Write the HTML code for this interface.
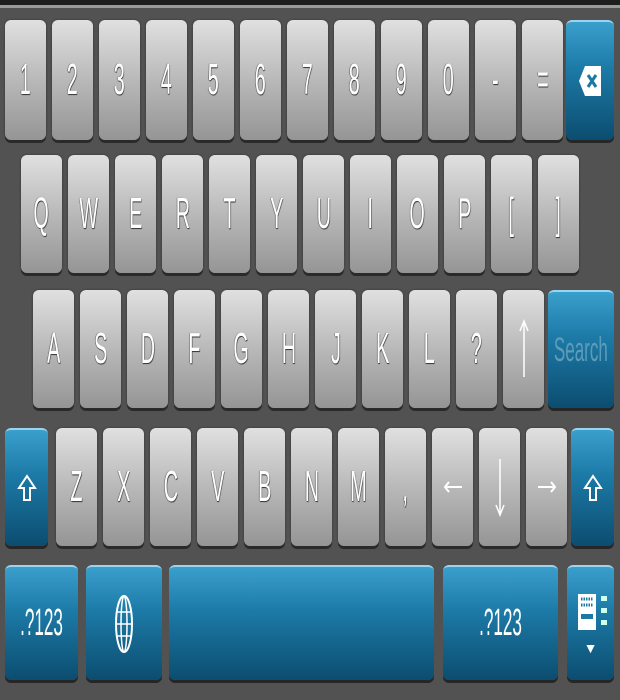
<!DOCTYPE html>
<html><head><meta charset="utf-8"><style>
body{margin:0;width:620px;height:700px;overflow:hidden;background:#525252;position:relative;font-family:"Liberation Sans",sans-serif}
.top{position:absolute;left:0;top:0;width:620px;height:5px;background:#1e1e1e}
.line{position:absolute;left:0;top:5px;width:620px;height:3px;background:#9a9a9a}
.k{position:absolute;width:41px;border-radius:6px;background:linear-gradient(#e0e0e0,#b5b5b5 55%,#959595);box-shadow:0 3px 0 #2a2a2a,0 0 2px #333;display:flex;align-items:center;justify-content:center;color:#fff}
.k span{display:inline-block;font-size:44px;transform:scaleX(.45);text-shadow:1px 1px 1px #333,-1px 0 1px #555;white-space:nowrap}
.b{position:absolute;border-radius:6px;background:linear-gradient(#3a9fcc,#1c79a6 40%,#0c4d70);border-top:2px solid #9ad4ef;box-shadow:0 3px 0 #262626;display:flex;align-items:center;justify-content:center;color:#fff}
.b span{display:inline-block;font-size:38px;transform:scaleX(.45);white-space:nowrap}
.r1{top:20px;height:120px}.r2{top:155px;height:118px}.r3{top:290px;height:118px}.r4{top:428px;height:118px}
</style></head><body>
<div class="top"></div><div class="line"></div>
<div class="k r1" style="left:5px"><span>1</span></div>
<div class="k r1" style="left:52px"><span>2</span></div>
<div class="k r1" style="left:99px"><span>3</span></div>
<div class="k r1" style="left:146px"><span>4</span></div>
<div class="k r1" style="left:193px"><span>5</span></div>
<div class="k r1" style="left:240px"><span>6</span></div>
<div class="k r1" style="left:287px"><span>7</span></div>
<div class="k r1" style="left:334px"><span>8</span></div>
<div class="k r1" style="left:381px"><span>9</span></div>
<div class="k r1" style="left:428px"><span>0</span></div>
<div class="k r1" style="left:475px"><span>-</span></div>
<div class="k r1" style="left:522px"><span>=</span></div>
<div class="b" style="left:566px;top:20px;width:48px;height:118px"><svg width="26" height="34" viewBox="0 0 26 34"><path d="M8 2h16v30H8L2 17z" fill="#fff"/><path d="M11 11l8 12M19 11l-8 12" stroke="#1c79a6" stroke-width="3"/></svg></div>

<div class="k r2" style="left:21px"><span>Q</span></div>
<div class="k r2" style="left:68px"><span>W</span></div>
<div class="k r2" style="left:115px"><span>E</span></div>
<div class="k r2" style="left:162px"><span>R</span></div>
<div class="k r2" style="left:209px"><span>T</span></div>
<div class="k r2" style="left:256px"><span>Y</span></div>
<div class="k r2" style="left:303px"><span>U</span></div>
<div class="k r2" style="left:350px"><span>I</span></div>
<div class="k r2" style="left:397px"><span>O</span></div>
<div class="k r2" style="left:444px"><span>P</span></div>
<div class="k r2" style="left:491px"><span>[</span></div>
<div class="k r2" style="left:538px"><span>]</span></div>

<div class="k r3" style="left:33px"><span>A</span></div>
<div class="k r3" style="left:80px"><span>S</span></div>
<div class="k r3" style="left:127px"><span>D</span></div>
<div class="k r3" style="left:174px"><span>F</span></div>
<div class="k r3" style="left:221px"><span>G</span></div>
<div class="k r3" style="left:268px"><span>H</span></div>
<div class="k r3" style="left:315px"><span>J</span></div>
<div class="k r3" style="left:362px"><span>K</span></div>
<div class="k r3" style="left:409px"><span>L</span></div>
<div class="k r3" style="left:456px"><span>?</span></div>
<div class="k r3" style="left:503px"><svg width="10" height="60" viewBox="0 0 10 60"><path d="M5 2v56M1 12L5 2l4 10" stroke="#fff" stroke-width="1.5" fill="none"/></svg></div>
<div class="b" style="left:548px;top:290px;width:66px;height:116px"><span style="color:#5d9bbb;font-size:34px;transform:scaleX(.5)">Search</span></div>

<div class="b" style="left:5px;top:428px;width:43px;height:116px"><svg width="20" height="28" viewBox="0 0 20 28"><path d="M10 2L2 14h5v12h6V14h5z" fill="none" stroke="#fff" stroke-width="2"/></svg></div>
<div class="k r4" style="left:56px"><span>Z</span></div>
<div class="k r4" style="left:103px"><span>X</span></div>
<div class="k r4" style="left:150px"><span>C</span></div>
<div class="k r4" style="left:197px"><span>V</span></div>
<div class="k r4" style="left:244px"><span>B</span></div>
<div class="k r4" style="left:291px"><span>N</span></div>
<div class="k r4" style="left:338px"><span>M</span></div>
<div class="k r4" style="left:385px"><span>,</span></div>
<div class="k r4" style="left:432px"><svg width="20" height="20" viewBox="0 0 20 20"><path d="M2 10h17M6 5l-4 5 4 5" stroke="#fff" stroke-width="2" fill="none"/></svg></div>
<div class="k r4" style="left:479px"><svg width="10" height="60" viewBox="0 0 10 60"><path d="M5 2v56M1 48l4 10 4-10" stroke="#fff" stroke-width="1.5" fill="none"/></svg></div>
<div class="k r4" style="left:526px"><svg width="20" height="20" viewBox="0 0 20 20"><path d="M1 10h17M14 5l4 5-4 5" stroke="#fff" stroke-width="2" fill="none"/></svg></div>
<div class="b" style="left:571px;top:428px;width:43px;height:116px"><svg width="20" height="28" viewBox="0 0 20 28"><path d="M10 2L2 14h5v12h6V14h5z" fill="none" stroke="#fff" stroke-width="2"/></svg></div>

<div class="b" style="left:5px;top:565px;width:73px;height:113px"><span>.?123</span></div>
<div class="b" style="left:86px;top:565px;width:76px;height:113px"><svg width="18" height="60" viewBox="0 0 18 60"><ellipse cx="9" cy="30" rx="8" ry="28" fill="none" stroke="#fff" stroke-width="2"/><ellipse cx="9" cy="30" rx="3" ry="28" fill="none" stroke="#fff" stroke-width="1.5"/><path d="M1 18h16M1 30h16M1 42h16" stroke="#fff" stroke-width="1.5"/></svg></div>
<div class="b" style="left:169px;top:565px;width:265px;height:113px"></div>
<div class="b" style="left:443px;top:565px;width:115px;height:113px"><span>.?123</span></div>
<div class="b" style="left:567px;top:565px;width:47px;height:113px;flex-direction:column"><svg width="36" height="40" viewBox="0 0 36 40"><rect x="5" y="2" width="18" height="36" fill="#fff"/><path d="M8 7h12M8 13h12" stroke="#1c79a6" stroke-width="3" stroke-dasharray="1.5 1"/><rect x="8" y="22" width="12" height="5" fill="#1c79a6"/><rect x="28" y="4" width="6" height="5" fill="#cfe"/><rect x="28" y="16" width="6" height="5" fill="#cfe"/><rect x="28" y="28" width="6" height="5" fill="#cfe"/></svg><div style="font-size:14px;margin-top:8px">▼</div></div>
</body></html>
